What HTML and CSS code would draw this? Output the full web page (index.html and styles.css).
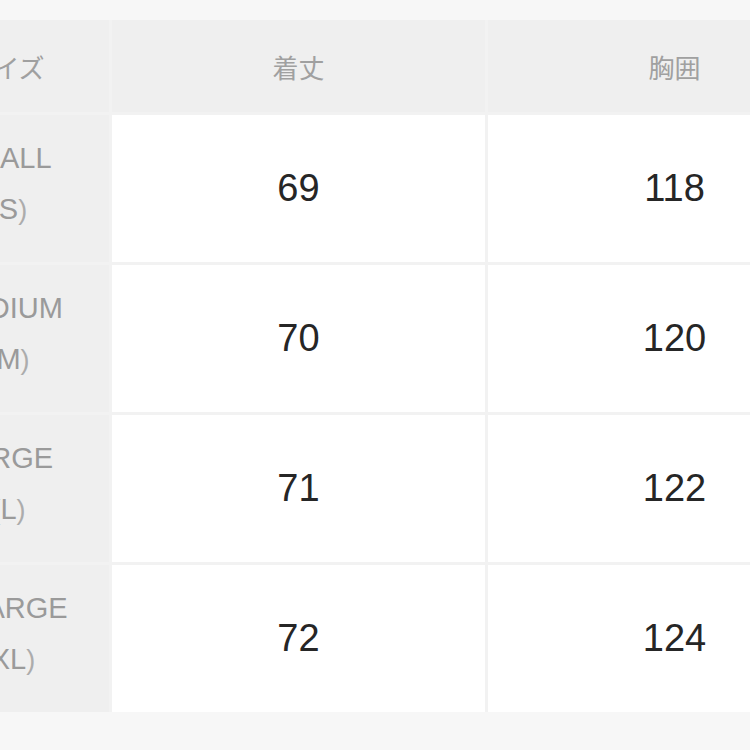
FILE: index.html
```html
<!DOCTYPE html>
<html lang="ja">
<head>
<meta charset="utf-8">
<title>サイズ表</title>
<link rel="stylesheet" href="styles.css">
</head>
<body>
<div class="sheet">
  <div class="chart">
    <div class="cell head label-col">サイズ</div>
    <div class="cell head">着丈</div>
    <div class="cell head">胸囲</div>

    <div class="cell size"><span class="name">SMALL</span><span class="abbr"><span class="par">(</span>S<span class="par">)</span></span></div>
    <div class="cell val">69</div>
    <div class="cell val">118</div>

    <div class="cell size"><span class="name">MEDIUM</span><span class="abbr"><span class="par">(</span>M<span class="par">)</span></span></div>
    <div class="cell val">70</div>
    <div class="cell val">120</div>

    <div class="cell size"><span class="name">LARGE</span><span class="abbr"><span class="par">(</span>L<span class="par">)</span></span></div>
    <div class="cell val">71</div>
    <div class="cell val">122</div>

    <div class="cell size"><span class="name">X-LARGE</span><span class="abbr"><span class="par">(</span>XL<span class="par">)</span></span></div>
    <div class="cell val">72</div>
    <div class="cell val">124</div>
  </div>
</div>
</body>
</html>
```

FILE: styles.css
```css
html, body {
  margin: 0;
  padding: 0;
  overflow: hidden;
  background: #f7f7f7;
}

.sheet {
  width: 750px;
  height: 750px;
  overflow: hidden;
  padding-top: 20px;
  box-sizing: border-box;
}

.chart {
  display: grid;
  grid-template-columns: 210px 373px 373px;
  grid-template-rows: 92px repeat(4, 147px);
  gap: 3px;
  margin-left: -101px;
  width: max-content;
  background: #f2f2f2;
}

.cell {
  display: flex;
  align-items: center;
  justify-content: center;
  text-align: center;
}

.head {
  background: #efefef;
  color: #a0a0a0;
  font-family: "Noto Sans CJK JP", sans-serif;
  font-size: 26px;
  font-weight: 400;
}

.head.label-col {
  padding-left: 4px;
  box-sizing: border-box;
}

.size {
  background: #efefef;
  flex-direction: column;
  color: #9a9a9a;
  font-family: "Liberation Sans", "Noto Sans CJK JP", sans-serif;
  font-size: 29px;
  line-height: 51px;
  padding-bottom: 8px;
  box-sizing: border-box;
}

.size .name,
.size .abbr {
  display: block;
}

.size .abbr {
  padding-left: 9px;
}

.size .par {
  font-size: 27px;
  color: #acacac;
}

.val {
  background: #ffffff;
  color: #262626;
  font-family: "Liberation Sans", sans-serif;
  font-size: 38px;
}
```
